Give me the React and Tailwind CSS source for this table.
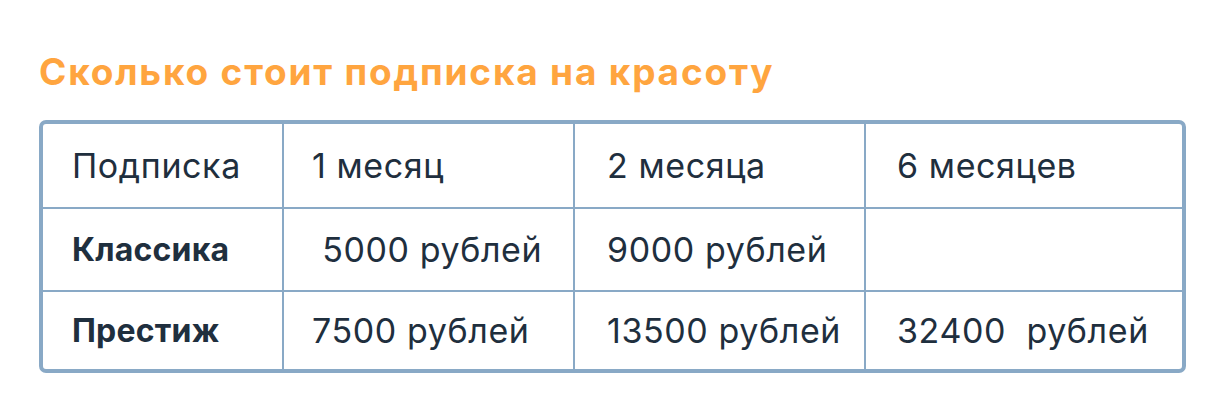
const ROWS = [
  { cells: ['Подписка', '1 месяц', '2 месяца', '6 месяцев'], bold: false, h: 'h-[85px]' },
  { cells: ['Классика', '\u00a05000 рублей', '9000 рублей', ''], bold: true, h: 'h-[83px]' },
  { cells: ['Престиж', '7500 рублей', '13500 рублей', '32400\u00a0 рублей'], bold: true, h: 'h-[77px]' },
]

const PAD = ['pl-[29px]', 'pl-[28px]', 'pl-[32px]', 'pl-[31px]']

export default function App() {
  return (
    <div className="w-[1230px] h-[415px] bg-white pt-[46px] pl-[39px]" style={{ fontFamily: 'Inter, "Noto Sans", sans-serif' }}>
      <h1 className="text-[37px] font-bold leading-[52px] text-[#ffa53f] tracking-[1.8px]">
        Сколько стоит подписка на красоту
      </h1>
      <div className="mt-[22px] w-[1147px] border-4 border-[#89a9c6] rounded-[7px] overflow-hidden">
        <div className="grid grid-cols-[241px_291px_291px_1fr]">
          {ROWS.map((row, r) =>
            row.cells.map((c, i) => (
              <div
                key={r + '-' + i}
                className={[
                  'flex items-center text-[#1f2f3e]',
                  row.h,
                  PAD[i],
                  i < 3 ? 'border-r-2 border-[#89a9c6]' : '',
                  r < 2 ? 'border-b-2 border-b-[#89a9c6]' : '',
                  i === 0 && row.bold
                    ? 'font-bold text-[32px] tracking-[0.2px]'
                    : 'font-normal text-[34px] tracking-[0.6px]',
                ].join(' ')}
              >
                {c}
              </div>
            ))
          )}
        </div>
      </div>
    </div>
  )
}
